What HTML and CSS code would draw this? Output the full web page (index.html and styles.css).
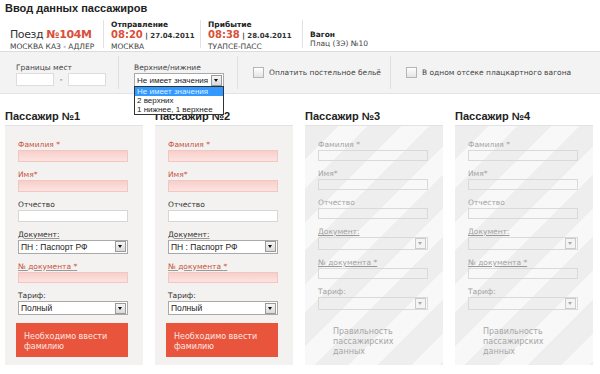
FILE: index.html
```html
<!DOCTYPE html>
<html lang="ru">
<head>
<meta charset="UTF-8" />
<title>Ввод данных пассажиров</title>
<link rel="stylesheet" href="styles.css">
</head>
<body>
<h1 class="title">Ввод данных пассажиров</h1>

<div class="trip">
  <div class="trip-item train">
    <div class="train-name">Поезд <b>№104M</b></div>
    <div class="sub">МОСКВА КАЗ - АДЛЕР</div>
  </div>
  <div class="trip-item dep">
    <div class="cap">Отправление</div>
    <div class="time"><span class="red">08:20</span> | 27.04.2011</div>
    <div class="sub">МОСКВА</div>
  </div>
  <div class="trip-item arr">
    <div class="cap">Прибытие</div>
    <div class="time"><span class="red">08:38</span> | 28.04.2011</div>
    <div class="sub">ТУАПСЕ-ПАСС</div>
  </div>
  <div class="trip-item wagon">
    <div class="cap">Вагон</div>
    <div class="sub">Плац (3Э) №10</div>
  </div>
</div>

<div class="filters">
  <div class="fgroup seats">
    <div class="flabel">Границы мест</div>
    <div class="range">
      <span class="box"></span><span class="dash">-</span><span class="box"></span>
    </div>
  </div>
  <div class="fgroup berth">
    <div class="flabel">Верхние/нижние</div>
    <div class="select small">
      <span>Не имеет значения</span><i class="arrow"></i>
    </div>
    <ul class="dropdown">
      <li class="active">Не имеет значения</li>
      <li>2 верхних</li>
      <li>1 нижнее, 1 верхнее</li>
    </ul>
  </div>
  <div class="fgroup check linen">
    <span class="cb"></span>Оплатить постельное бельё
  </div>
  <div class="fgroup check">
    <span class="cb"></span>В одном отсеке плацкартного вагона
  </div>
</div>

<div class="passengers">
  <section class="pax">
    <h2>Пассажир №1</h2>
    <div class="card">
      <label class="req">Фамилия *</label><div class="input pink"></div>
      <label class="req">Имя*</label><div class="input pink"></div>
      <label>Отчество</label><div class="input"></div>
      <label class="ul">Документ:</label>
      <div class="select"><span>ПН : Паспорт РФ</span><i class="arrow"></i></div>
      <label class="req ul">№ документа <span>*</span></label><div class="input pink"></div>
      <label>Тариф:</label>
      <div class="select"><span>Полный</span><i class="arrow"></i></div>
      <div class="error">Необходимо ввести фамилию</div>
    </div>
  </section>
  <section class="pax">
    <h2>Пассажир №2</h2>
    <div class="card">
      <label class="req">Фамилия *</label><div class="input pink"></div>
      <label class="req">Имя*</label><div class="input pink"></div>
      <label>Отчество</label><div class="input"></div>
      <label class="ul">Документ:</label>
      <div class="select"><span>ПН : Паспорт РФ</span><i class="arrow"></i></div>
      <label class="req ul">№ документа <span>*</span></label><div class="input pink"></div>
      <label>Тариф:</label>
      <div class="select"><span>Полный</span><i class="arrow"></i></div>
      <div class="error">Необходимо ввести фамилию</div>
    </div>
  </section>
  <section class="pax off">
    <h2>Пассажир №3</h2>
    <div class="card">
      <label>Фамилия *</label><div class="input"></div>
      <label>Имя*</label><div class="input"></div>
      <label>Отчество</label><div class="input"></div>
      <label class="ul">Документ:</label>
      <div class="select"><span></span><i class="arrow"></i></div>
      <label class="ul">№ документа *</label><div class="input"></div>
      <label>Тариф:</label>
      <div class="select"><span></span><i class="arrow"></i></div>
      <div class="note">Правильность пассажирских данных</div>
    </div>
  </section>
  <section class="pax off">
    <h2>Пассажир №4</h2>
    <div class="card">
      <label>Фамилия *</label><div class="input"></div>
      <label>Имя*</label><div class="input"></div>
      <label>Отчество</label><div class="input"></div>
      <label class="ul">Документ:</label>
      <div class="select"><span></span><i class="arrow"></i></div>
      <label class="ul">№ документа *</label><div class="input"></div>
      <label>Тариф:</label>
      <div class="select"><span></span><i class="arrow"></i></div>
      <div class="note">Правильность пассажирских данных</div>
    </div>
  </section>
</div>
</body>
</html>
```

FILE: styles.css
```css
* { box-sizing: border-box; }
body {
  margin: 0;
  width: 600px;
  height: 374px;
  overflow: hidden;
  background: #fff;
  color: #333;
  font-family: "DejaVu Sans", Verdana, sans-serif;
  font-size: 7.5px;
}
.title {
  margin: 0;
  padding: 2px 0 0 5px;
  font: bold 11px/13px "Liberation Sans", Arial, sans-serif;
  color: #222;
}

/* поезд */
.trip {
  display: flex;
  margin-top: 3px;
  height: 34px;
  border-bottom: 1px solid #dcdcdc;
}
.trip-item {
  margin: 2px 0 3px;
  padding: 0 0 0 7px;
  border-left: 1px solid #e2e2e2;
  white-space: nowrap;
}
.train { width: 103px; padding: 8px 0 0 10px; border-left: none; }
.dep { width: 97px; }
.arr { width: 102px; }
.wagon { flex: 1; padding-top: 10px; }
.train-name {
  font: 11px/14px "DejaVu Sans", Verdana, sans-serif;
  letter-spacing: -0.4px;
  color: #333;
}
.train-name b { color: #d9503a; }
.cap { font-weight: bold; line-height: 9px; color: #222; }
.time { font-weight: bold; line-height: 12px; color: #333; font-size: 7px; }
.time .red { color: #d9503a; font-size: 10px; }
.sub { line-height: 10px; color: #444; }

/* фильтры */
.filters {
  display: flex;
  height: 42px;
  background: #f3f3f3;
  border-bottom: 1px solid #e3e3e3;
  position: relative;
}
.fgroup {
  margin: 4px 0;
  border-left: 1px solid #e0e0e0;
  padding: 7px 0 0 15px;
  position: relative;
}
.fgroup.seats { width: 118px; border-left: none; padding-left: 16px; }
.fgroup.berth { width: 119px; }
.fgroup.check {
  display: flex;
  align-items: center;
  padding-top: 0;
  color: #444;
}
.fgroup.linen { width: 153px; }
.flabel { line-height: 9px; color: #444; margin-bottom: 1px; }
.range { display: flex; align-items: center; }
.box {
  width: 38px;
  height: 13px;
  background: #fff;
  border: 1px solid #ddd;
}
.dash { width: 14px; text-align: center; }
.cb {
  width: 11px;
  height: 11px;
  margin-right: 5px;
  border: 1px solid #b5b5b5;
  background: linear-gradient(#fff, #e4e4e4);
}

.select {
  display: flex;
  align-items: center;
  height: 14px;
  padding-left: 2px;
  background: #fff;
  border: 1px solid #a9a9a9;
  font: 8.5px "Liberation Sans", Arial, sans-serif;
  color: #222;
}
.select span { flex: 1; white-space: nowrap; overflow: hidden; }
.select.small { width: 90px; height: 15px; font-size: 8px; }
.arrow {
  position: relative;
  flex: none;
  width: 11px;
  height: 11px;
  margin-right: 1px;
  border: 1px solid #9a9a9a;
  background: linear-gradient(#f6f6f6, #dadada);
}
.arrow::after {
  content: "";
  position: absolute;
  left: 2px;
  top: 3px;
  border-left: 2.5px solid transparent;
  border-right: 2.5px solid transparent;
  border-top: 3px solid #111;
}
.dropdown {
  position: absolute;
  left: 15px;
  top: 30px;
  z-index: 2;
  width: 90px;
  margin: 0;
  padding: 0;
  list-style: none;
  background: #fff;
  border: 1px solid #333;
  font: 8px/9px "Liberation Sans", Arial, sans-serif;
  color: #222;
}
.dropdown li { padding-left: 2px; white-space: nowrap; }
.dropdown li.active { background: #3399ff; color: #dfefff; }

/* пассажиры */
.passengers {
  display: grid;
  grid-template-columns: repeat(4, 150px);
  padding: 16px 0 0 5px;
}
.pax h2 {
  margin: 0;
  font: bold 11px/13px "Liberation Sans", Arial, sans-serif;
  color: #222;
}
.card {
  width: 138px;
  height: 240px;
  margin-top: 2px;
  padding: 14px 15px 8px 13px;
  background: #f3f2f0;
  border-top: 1px solid #e2e2e2;
  display: flex;
  flex-direction: column;
}
.card label { line-height: 9px; margin-bottom: 1px; color: #333; }
.card label.req { color: #c9543f; }
.card label.ul { text-decoration: underline; text-decoration-color: #999; }
.card label.req.ul span { text-decoration: none; }
.input {
  height: 12px;
  margin-bottom: 8px;
  background: #fff;
  border: 1px solid #d6d6d6;
}
.input.pink {
  background: linear-gradient(#f7cfcb, #fde3e0);
  border-color: #f2c6c1;
}
.card .select { margin-bottom: 8px; }
.error {
  height: 34px;
  margin-left: -2px;
  padding: 9px 8px 0;
  background: #e9553c;
  color: #fde6e1;
  font-size: 8px;
  line-height: 10px;
}

.pax.off .card {
  background: repeating-linear-gradient(135deg, #eeeeee 0 24px, #f8f8f8 24px 44px);
}
.pax.off .card label { color: #a3a3a3; }
.pax.off .input,
.pax.off .select {
  background: transparent;
  border-color: #d9d9d9;
}
.pax.off .arrow {
  border-color: #ccc;
  background: #f4f4f4;
}
.pax.off .arrow::after { border-top-color: #aaa; }
.note {
  margin-top: 9px;
  padding-left: 15px;
  width: 85px;
  line-height: 10px;
  font-size: 8px;
  color: #a6a6a6;
}
```
